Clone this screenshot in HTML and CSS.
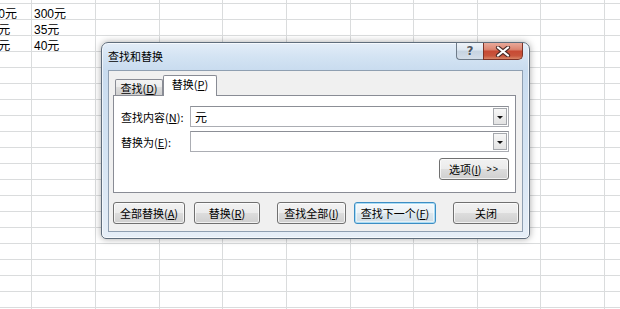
FILE: index.html
```html
<!DOCTYPE html>
<html lang="zh-CN">
<head>
<meta charset="utf-8">
<title>查找和替换</title>
<link rel="stylesheet" href="styles.css">
</head>
<body>
<div class="sheet">
  <div class="row row0"></div>
  <div class="row">
    <div class="cell c0">200元</div><div class="cell">300元</div>
  </div>
  <div class="row">
    <div class="cell c0">25元</div><div class="cell">35元</div>
  </div>
  <div class="row">
    <div class="cell c0">30元</div><div class="cell">40元</div>
  </div>
</div>

<div class="dialog">
  <div class="titlebar">
    <div class="title">查找和替换</div>
    <div class="caption-btns">
      <div class="cbtn help"><span class="qmark">?</span></div>
      <div class="cbtn close">
        <svg width="16" height="11" viewBox="0 0 16 11">
          <path d="M3 1.5 L13 9.5 M13 1.5 L3 9.5" stroke="#4a2a26" stroke-width="4.2" stroke-linecap="round" fill="none"/>
          <path d="M3 1.5 L13 9.5 M13 1.5 L3 9.5" stroke="#ffffff" stroke-width="2.2" stroke-linecap="round" fill="none"/>
        </svg>
      </div>
    </div>
  </div>
  <div class="client">
    <div class="tabs">
      <div class="tab">查找(<u>D</u>)</div>
      <div class="tab active">替换(<u>P</u>)</div>
    </div>
    <div class="panel">
      <div class="field">
        <label class="lbl">查找内容(<u>N</u>):</label>
        <div class="combo"><span class="val">元</span><span class="drop"><span class="tri"></span></span></div>
      </div>
      <div class="field">
        <label class="lbl">替换为(<u>E</u>):</label>
        <div class="combo"><span class="val"></span><span class="drop"><span class="tri"></span></span></div>
      </div>
      <div class="opts-row">
        <div class="btn opts">选项(<u>I</u>) <span class="gt">&gt;&gt;</span></div>
      </div>
    </div>
    <div class="actions">
      <div class="btn b1">全部替换(<u>A</u>)</div>
      <div class="btn b2">替换(<u>R</u>)</div>
      <div class="btn b3">查找全部(<u>I</u>)</div>
      <div class="btn b4 focus">查找下一个(<u>F</u>)</div>
      <div class="btn b5">关闭</div>
    </div>
  </div>
</div>
</body>
</html>
```

FILE: styles.css
```css
* { box-sizing: border-box; }
html, body { margin: 0; padding: 0; height: 100%; }
body {
  background: #ffffff;
  font-family: "Liberation Sans", "Noto Sans CJK SC", sans-serif;
  font-size: 12px;
  color: #000;
  overflow: hidden;
}

/* spreadsheet */
.sheet {
  height: 309px;
  background:
    linear-gradient(#dadcdd, #dadcdd) 31px 0 / 1px 100% no-repeat,
    linear-gradient(#dadcdd, #dadcdd) 95px 0 / 1px 100% no-repeat,
    linear-gradient(#dadcdd, #dadcdd) 159px 0 / 1px 100% no-repeat,
    linear-gradient(#dadcdd, #dadcdd) 222px 0 / 1px 100% no-repeat,
    linear-gradient(#dadcdd, #dadcdd) 286px 0 / 1px 100% no-repeat,
    linear-gradient(#dadcdd, #dadcdd) 350px 0 / 1px 100% no-repeat,
    linear-gradient(#dadcdd, #dadcdd) 413px 0 / 1px 100% no-repeat,
    linear-gradient(#dadcdd, #dadcdd) 477px 0 / 1px 100% no-repeat,
    linear-gradient(#dadcdd, #dadcdd) 540px 0 / 1px 100% no-repeat,
    linear-gradient(#dadcdd, #dadcdd) 604px 0 / 1px 100% no-repeat,
    linear-gradient(to bottom, transparent 15px, #dadcdd 15px) 0 4px / 100% 16px repeat-y,
    #ffffff;
}
.row {
  display: grid;
  grid-template-columns: 32px 64px 64px 63px 64px 64px 63px 64px 63px 64px 1fr;
  height: 16px;
}
.row0 { height: 4px; }
.cell {
  height: 16px;
  line-height: 16px;
  padding: 2px 0 0 2px;
  white-space: nowrap;
}
.c0 { text-indent: -17px; }

/* dialog window */
.dialog {
  position: absolute;
  left: 101px;
  top: 42px;
  width: 429px;
  height: 197px;
  border: 1px solid #5f6d7c;
  border-radius: 7px 7px 5px 5px;
  background:
    linear-gradient(to bottom, #e3edf8 0, #d3e3f3 14px, #c9dcef 27px, #d6e5f4 60%, #e6eef7 100%);
  box-shadow: 0 0 7px rgba(0, 0, 0, 0.35), inset 0 0 0 1px rgba(255, 255, 255, 0.65);
  padding: 0 6px 6px 6px;
  font-family: "Noto Sans CJK SC", "Liberation Sans", sans-serif;
  font-size: 11px;
  color: #000;
}
.titlebar {
  height: 27px;
  display: flex;
  align-items: flex-start;
}
.title {
  margin-top: 5px;
  line-height: 16px;
  font-size: 11px;
  color: #000;
}
.caption-btns {
  margin-left: auto;
  display: flex;
}
.cbtn {
  height: 17px;
  display: flex;
  align-items: center;
  justify-content: center;
  border: 1px solid #6e7b89;
  border-top: none;
}
.help {
  width: 27px;
  border-radius: 0 0 0 4px;
  border-right: none;
  background: linear-gradient(#eef3f9 0, #dce6f0 45%, #c6d3e1 50%, #d4dee9 100%);
}
.qmark {
  font-family: "DejaVu Sans", sans-serif;
  font-weight: bold;
  font-size: 12px;
  line-height: 14px;
  color: #4d5560;
  text-shadow: 0 0 1px #fff;
}
.close {
  width: 40px;
  border-radius: 0 0 5px 0;
  border-color: #7d3226;
  background: linear-gradient(#e9a99a 0, #dc8672 40%, #c74a34 52%, #c8553c 80%, #d88668 100%);
}
.close svg { display: block; }

.client {
  height: 162px;
  border: 1px solid #8f9fb1;
  background: #f0f0f0;
}
.tabs {
  height: 24px;
  display: flex;
  align-items: flex-end;
  padding-left: 6px;
}
.tab {
  width: 48px;
  height: 16px;
  border: 1px solid #898c95;
  border-bottom: none;
  border-radius: 2px 2px 0 0;
  background: linear-gradient(#f3f3f3 0, #ebebeb 50%, #dddddd 50%, #cfcfcf 100%);
  text-align: center;
  line-height: 17px;
  font-size: 11px;
}
.tab.active {
  width: 54px;
  height: 21px;
  margin-bottom: -1px;
  margin-left: 0;
  background: #ffffff;
  line-height: 17px;
  position: relative;
  z-index: 1;
}
.panel {
  margin: 0 6px 0 4px;
  height: 98px;
  border: 1px solid #898c95;
  background: #ffffff;
  padding: 10px 6px 0 7px;
}
.field {
  display: flex;
  align-items: center;
  height: 21px;
  margin-bottom: 4px;
}
.lbl {
  width: 69px;
  flex: none;
  font-size: 11px;
  line-height: 14px;
}
.combo {
  flex: 1;
  height: 21px;
  border: 1px solid #abadb3;
  border-top-color: #8c8f96;
  background: #fff;
  display: flex;
  align-items: center;
  padding: 1px 1px 1px 4px;
}
.val {
  flex: 1;
  font-size: 12px;
  line-height: 16px;
}
.drop {
  width: 14px;
  height: 17px;
  border: 1px solid #a5a8ad;
  background: linear-gradient(#f7f7f7, #e3e3e3);
  display: flex;
  align-items: center;
  justify-content: center;
}
.tri {
  width: 0;
  height: 0;
  border-left: 3px solid transparent;
  border-right: 3px solid transparent;
  border-top: 3px solid #111;
  margin-top: 1px;
}
.opts-row {
  display: flex;
  justify-content: flex-end;
  margin-top: 6px;
}
.btn {
  height: 22px;
  border: 1px solid #707070;
  border-radius: 3px;
  background: linear-gradient(#f2f2f2 0, #ebebeb 50%, #dddddd 50%, #cfcfcf 100%);
  box-shadow: inset 0 0 0 1px rgba(255, 255, 255, 0.7);
  display: flex;
  align-items: center;
  justify-content: center;
  font-size: 11px;
  line-height: 14px;
  white-space: nowrap;
  flex: none;
}
.opts { width: 70px; }
.gt {
  font-family: "Liberation Sans", sans-serif;
  font-size: 9px;
  letter-spacing: 1px;
  margin-left: 5px;
}
.actions {
  display: flex;
  padding: 9px 0 0 4px;
}
.b1 { width: 72px; }
.b2 { width: 66px; margin-left: 9px; }
.b3 { width: 69px; margin-left: 17px; }
.b4 { width: 82px; margin-left: 8px; }
.b5 { width: 66px; margin-left: 17px; }
.btn.focus {
  border-color: #3c8dc3;
  box-shadow: inset 0 0 0 1px #a9dcf5, inset 0 0 0 2px rgba(255, 255, 255, 0.5);
  background: linear-gradient(#f3f8fb 0, #ebf2f6 50%, #dde8ee 50%, #cfdde6 100%);
}
u { text-decoration: underline; text-underline-offset: 1px; }
```
